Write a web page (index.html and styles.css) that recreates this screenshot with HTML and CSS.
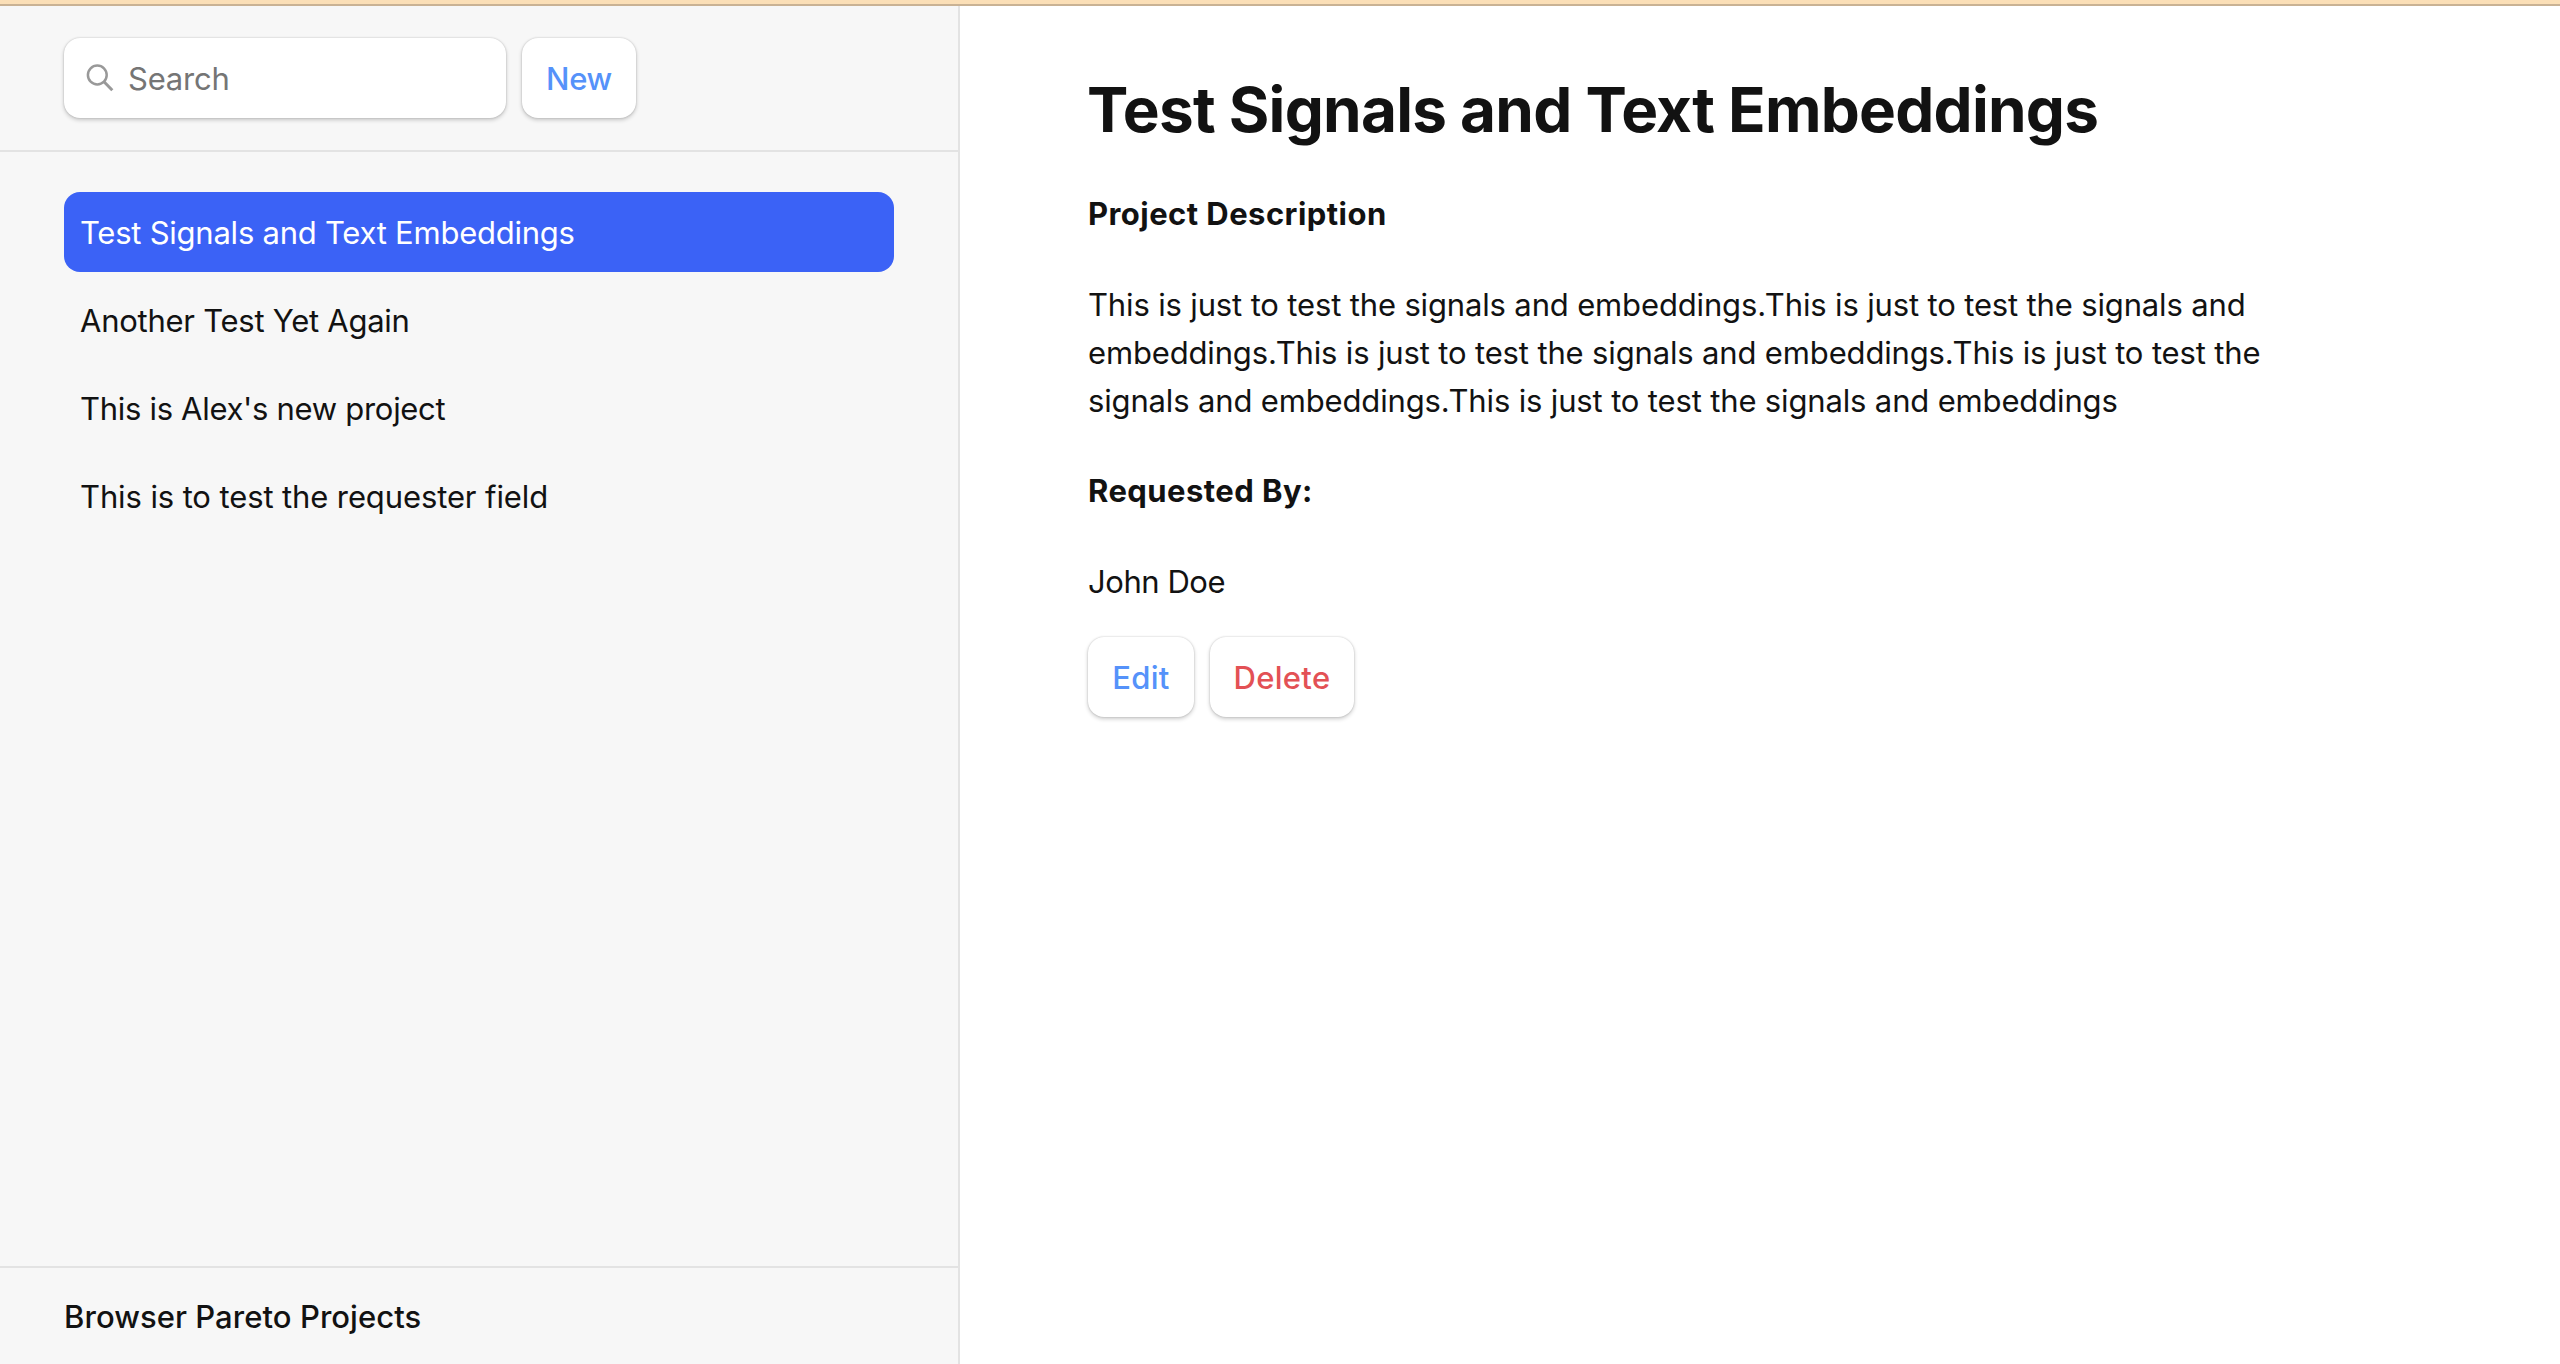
FILE: index.html
```html
<!DOCTYPE html>
<html lang="en">
<head>
<meta charset="utf-8">
<title>Pareto Projects</title>
<link rel="stylesheet" href="styles.css">
</head>
<body>
<div class="topbar"></div>
<div class="layout">
  <aside class="sidebar">
    <div class="toolbar">
      <label class="search">
        <svg class="search-icon" viewBox="0 0 32 32" fill="none" stroke="#999" aria-hidden="true">
          <circle cx="13.3" cy="13" r="9.4" stroke-width="2.5"/>
          <path d="M20 19.8 28.3 28.3" stroke-width="3"/>
        </svg>
        <input class="search-input" type="search" placeholder="Search">
      </label>
      <button class="button button-new">New</button>
    </div>
    <nav class="projects">
      <a class="project project-active">Test Signals and Text Embeddings</a>
      <a class="project project-another">Another Test Yet Again</a>
      <a class="project project-alex">This is Alex's new project</a>
      <a class="project project-requester">This is to test the requester field</a>
    </nav>
    <footer class="brand">Browser Pareto Projects</footer>
  </aside>
  <main class="detail">
    <h1 class="title">Test Signals and Text Embeddings</h1>
    <h4 class="label">Project Description</h4>
    <p class="text description">This is just to test the signals and embeddings.This is just to test the signals and embeddings.This is just to test the signals and embeddings.This is just to test the signals and embeddings.This is just to test the signals and embeddings</p>
    <h4 class="label">Requested By:</h4>
    <p class="text requester">John Doe</p>
    <div class="actions">
      <button class="button button-edit">Edit</button>
      <button class="button button-delete">Delete</button>
    </div>
  </main>
</div>
</body>
</html>
```

FILE: styles.css
```css
* {
  box-sizing: border-box;
}

body {
  margin: 0;
  height: 100vh;
  display: flex;
  flex-direction: column;
  overflow: hidden;
  background: #fff;
  color: #121212;
  font: 31px/48px Inter, sans-serif;
}

.topbar {
  flex: none;
  height: 6px;
  background: #fbdfb7;
  border-bottom: 2px solid #c9b294;
}

.layout {
  flex: 1;
  min-height: 0;
  display: flex;
}

.sidebar {
  width: 960px;
  display: flex;
  flex-direction: column;
  background: #f7f7f7;
  border-right: 2px solid #e3e3e3;
}

.toolbar {
  display: flex;
  gap: 16px;
  padding: 32px 64px;
  border-bottom: 2px solid #e3e3e3;
}

.search,
.button {
  height: 80px;
  border: 0;
  border-radius: 16px;
  background: #fff;
  box-shadow: 0 0 2px rgba(0, 0, 0, 0.2), 0 2px 4px rgba(0, 0, 0, 0.2);
}

.search {
  width: 442px;
  display: flex;
  align-items: center;
  gap: 12px;
  padding-left: 20px;
}

.search-icon {
  flex: none;
  width: 32px;
  height: 32px;
}

.search-input {
  flex: 1;
  min-width: 0;
  height: 50px;
  padding: 1px 0 0;
  border: 0;
  outline: 0;
  background: none;
  font: inherit;
  letter-spacing: -0.2px;
}

.search-input::placeholder {
  color: #757575;
}

.button {
  padding: 2px 0 0;
  color: #5592fa;
  font: 500 31px/48px Inter, sans-serif;
}

.button-new {
  width: 114px;
  letter-spacing: -0.3px;
}

.button-edit {
  width: 106px;
  letter-spacing: 0.3px;
}

.button-delete {
  width: 144px;
  color: #e35155;
  letter-spacing: 0.3px;
}

.projects {
  flex: 1;
  display: flex;
  flex-direction: column;
  gap: 8px;
  padding: 40px 64px;
}

.project {
  padding: 17px 16px 15px;
  border-radius: 16px;
  white-space: nowrap;
}

.project-active {
  background: #3b62f6;
  color: #fff;
  letter-spacing: -0.24px;
}

.project-another {
  letter-spacing: -0.26px;
}

.project-alex {
  letter-spacing: -0.3px;
}

.project-requester {
  letter-spacing: -0.11px;
}

.brand {
  height: 98px;
  padding: 25px 64px 0;
  border-top: 2px solid #e3e3e3;
  font-weight: 500;
  letter-spacing: 0.06px;
}

.detail {
  flex: 1;
  padding: 65px 128px 0;
}

.title {
  margin: 0 0 42px -1px;
  font-size: 62px;
  font-weight: 700;
  line-height: 77px;
  letter-spacing: -0.76px;
}

.label {
  margin: 0 0 43px;
  font-size: 31px;
  font-weight: 700;
  letter-spacing: 0.45px;
}

.text {
  margin: 0;
}

.description {
  width: 1184px;
  margin-bottom: 42px;
  letter-spacing: -0.15px;
}

.requester {
  margin-bottom: 31px;
  letter-spacing: -0.45px;
}

.actions {
  display: flex;
  gap: 16px;
}
```
